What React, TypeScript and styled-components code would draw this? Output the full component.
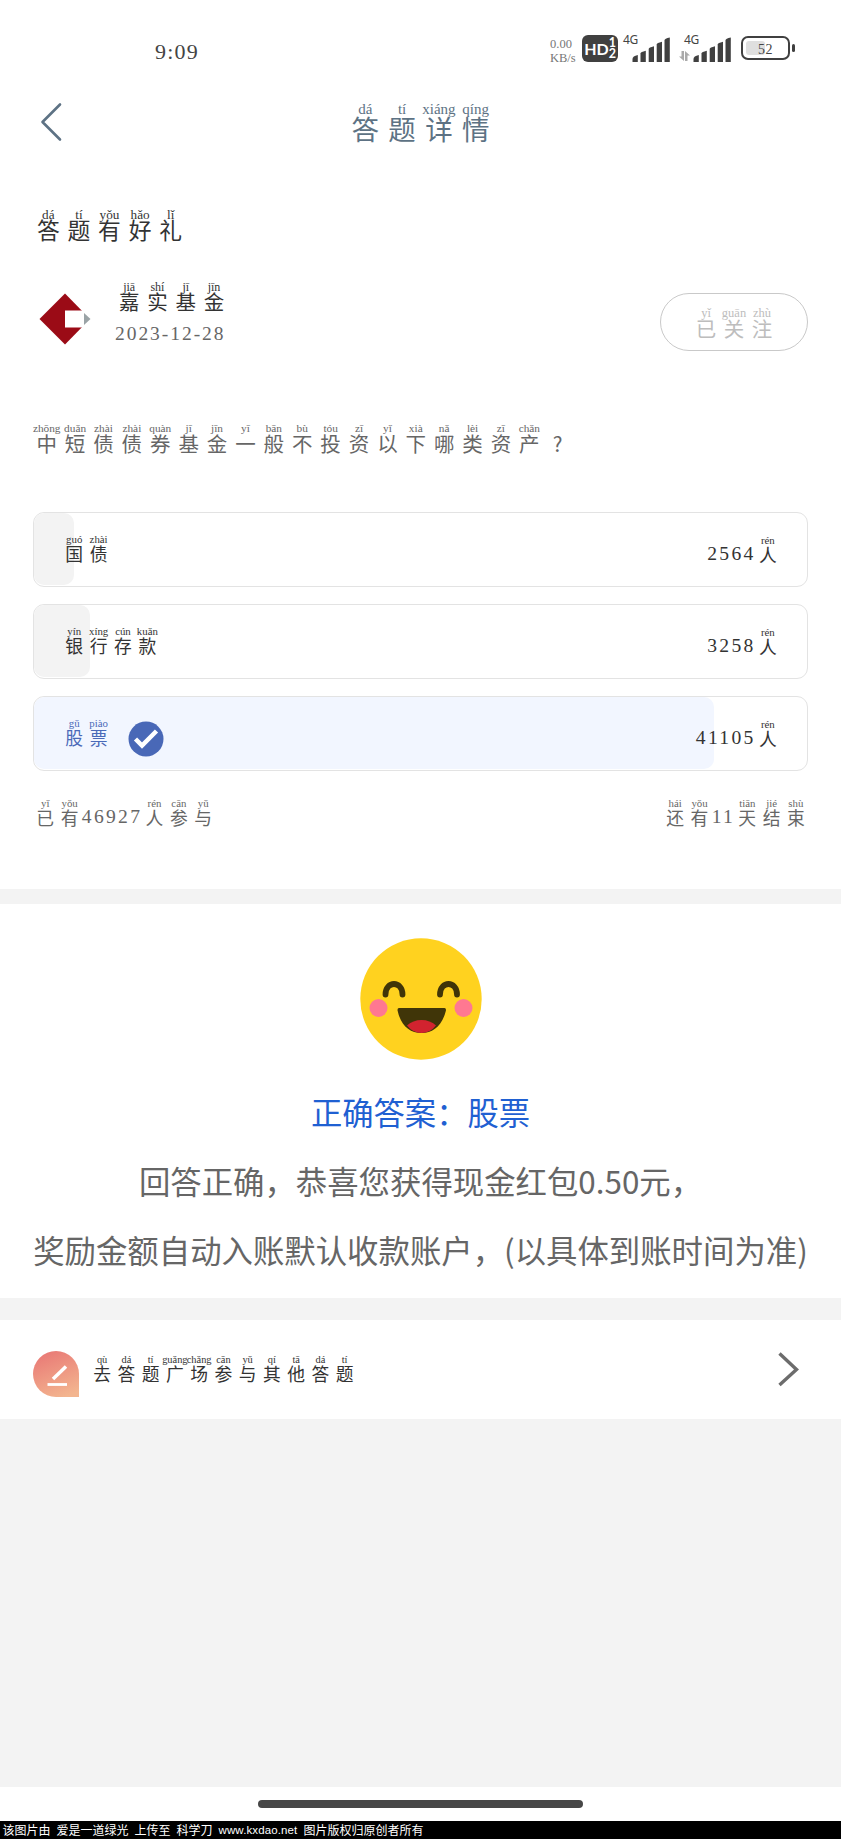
import React from 'react';
import styled, { createGlobalStyle } from 'styled-components';

const serif = '"Liberation Serif", "Noto Sans CJK SC", serif';
const sans = '"Noto Sans CJK SC", sans-serif';

const GlobalStyle = createGlobalStyle`
  *, *::before, *::after { box-sizing: border-box; }
  body { margin: 0; background: #f3f3f3; font-family: ${serif}; }
`;

const Screen = styled.main`
  width: 841px;
  height: 1839px;
  display: flex;
  flex-direction: column;
  background: #f3f3f3;
  overflow: hidden;
`;

/* ---------- annotated text ---------- */

const AnnotatedLine = styled.span<{ $color: string }>`
  display: inline-flex;
  align-items: flex-end;
  white-space: nowrap;
  color: ${(p) => p.$color};
`;

const Syllable = styled.span<{ $pitch: number }>`
  display: flex;
  flex-direction: column;
  align-items: center;
  width: ${(p) => p.$pitch}px;
`;

const Pinyin = styled.span<{ $size: number }>`
  font-family: "Liberation Serif", serif;
  font-size: ${(p) => p.$size}px;
  line-height: ${(p) => p.$size}px;
  height: ${(p) => p.$size}px;
`;

const Hanzi = styled.span<{ $size: number }>`
  margin-top: ${(p) => (p.$size < 20 ? 0 : -0.075)}em;
  font-family: ${sans};
  font-size: ${(p) => p.$size}px;
  line-height: ${(p) => p.$size}px;
  height: ${(p) => p.$size}px;
`;

const Digits = styled.span<{ $size: number }>`
  font-size: ${(p) => p.$size}px;
  line-height: ${(p) => p.$size}px;
  letter-spacing: 2.3px;
`;

type Part = [string, string?];

interface AnnotatedProps {
  parts: Part[];
  size: number;
  small: number;
  pitch: number;
  color: string;
}

function Annotated({ parts, size, small, pitch, color }: AnnotatedProps) {
  return (
    <AnnotatedLine $color={color}>
      {parts.map(([text, reading], i) =>
        reading === undefined ? (
          <Digits key={i} $size={19.6}>{text}</Digits>
        ) : (
          <Syllable key={i} $pitch={pitch}>
            <Pinyin $size={small}>{reading}</Pinyin>
            <Hanzi $size={size}>{text}</Hanzi>
          </Syllable>
        ),
      )}
    </AnnotatedLine>
  );
}

/* ---------- status bar ---------- */

const StatusBar = styled.header`
  height: 82px;
  flex: none;
  display: flex;
  align-items: flex-start;
  justify-content: space-between;
  padding: 35px 46px 0 155px;
  background: #fff;
  color: #444;
`;

const Clock = styled.time`
  margin-top: 5px;
  font-size: 22px;
  line-height: 24px;
  letter-spacing: 1.2px;
`;

const StatusIcons = styled.div`
  display: flex;
  align-items: flex-start;
`;

const Speed = styled.div`
  width: 32px;
  margin-top: 2px;
  font-size: 12.5px;
  line-height: 14px;
  color: #777;
`;

const HdBadge = styled.div`
  width: 36px;
  height: 27px;
  display: flex;
  align-items: center;
  justify-content: center;
  border-radius: 6px;
  background: #404040;
  color: #fff;
  font: bold 16px/27px Lato, sans-serif;
`;

const HdStack = styled.span`
  display: flex;
  flex-direction: column;
  font-size: 12.5px;
  line-height: 11.5px;
  margin-top: -1px;
`;

const Network = styled.div<{ $width: number; $gap: number }>`
  width: ${(p) => p.$width}px;
  margin-left: ${(p) => p.$gap}px;
  display: flex;
  align-items: flex-start;
`;

const NetworkLabel = styled.span`
  width: 15px;
  font: 12px/16px "Noto Sans", sans-serif;
  letter-spacing: -0.4px;
  margin: -5px -6px 0 0;
  padding-top: 2px;
`;

const Battery = styled.div`
  width: 49px;
  height: 24px;
  margin: 1px 0 0 10px;
  padding: 2.5px 3px;
  display: flex;
  border: 2.5px solid #404040;
  border-radius: 7px;
`;

const Charge = styled.div`
  width: 19px;
  height: 14px;
  border-radius: 3px;
  background: #dfdfdf;
`;

const ChargeText = styled.span`
  margin: 2px 0 0 -7px;
  font-size: 14px;
  line-height: 14px;
  letter-spacing: 0.6px;
`;

const BatteryTip = styled.span`
  width: 3px;
  height: 8px;
  margin: 9px 0 0 2px;
  border-radius: 1.5px;
  background: #404040;
`;

function SignalBars() {
  return (
    <svg width="38" height="25" viewBox="0 0 38 25" fill="#404040">
      <path d="M0.5 25v-3q0-3 5.300-4v7z" />
      <path d="M8.5 25V16.500q0-1.500 5.300-2.800V25z" />
      <path d="M16.700 25V12q0-1.500 5.300-2.800V25z" />
      <path d="M24.700 25V7.500q0-1.500 5.300-2.800V25z" />
      <path d="M32.500 25V3.500q0-2 5.300-3V25z" />
    </svg>
  );
}

const Signal = styled.span<{ $top: number }>`
  display: flex;
  margin-top: ${(p) => p.$top}px;
`;

const DataArrows = styled.svg`
  margin: 16px -6px 0 0;
`;

/* ---------- navigation ---------- */

const NavBar = styled.nav`
  height: 100px;
  flex: none;
  display: grid;
  grid-template-columns: 100px 1fr 100px;
  padding-top: 20px;
  background: #fff;
`;

const BackButton = styled.button`
  height: 40px;
  padding: 0 0 0 39px;
  border: 0;
  background: none;
  display: flex;
`;

const NavTitle = styled.div`
  display: flex;
  justify-content: center;
  align-items: flex-start;
`;

/* ---------- question ---------- */

const QuestionCard = styled.section`
  height: 707px;
  flex: none;
  padding: 26px 33px 0;
  background: #fff;
`;

const Heading = styled.h1`
  margin: 0;
  height: 73px;
  display: flex;
  align-items: flex-start;
  font-weight: 400;
`;

const Publisher = styled.div`
  height: 142px;
  display: flex;
  align-items: flex-start;
`;

const Logo = styled.svg`
  margin: 12px 23px 0 5px;
`;

const PublisherInfo = styled.div`
  flex: 1;
  display: flex;
  flex-direction: column;
  align-items: flex-start;
`;

const PublisherName = styled.div`
  display: flex;
`;

const DateText = styled.time`
  margin-top: 12px;
  font-size: 19.5px;
  line-height: 20px;
  letter-spacing: 1.95px;
  color: #666;
`;

const FollowButton = styled.button`
  width: 148px;
  height: 58px;
  margin-top: 12px;
  padding: 2px 0 0;
  display: flex;
  justify-content: center;
  align-items: center;
  border: 1.5px solid #c9c9c9;
  border-radius: 29px;
  background: #fff;
`;

const Question = styled.div`
  height: 89px;
  display: flex;
  align-items: flex-start;
  margin-left: -0.5px;
`;

const Options = styled.div`
  display: flex;
  flex-direction: column;
  gap: 17px;
`;

const Option = styled.div`
  height: 75px;
  display: grid;
  border: 1.5px solid #e3e3e3;
  border-radius: 11px;
  overflow: hidden;
  > * { grid-area: 1 / 1; }
`;

const Share = styled.div<{ $active?: boolean }>`
  height: 72px;
  border-radius: 10px;
  background: ${(p) => (p.$active ? '#f2f6ff' : '#f3f3f3')};
`;

const OptionBody = styled.div`
  display: flex;
  align-items: flex-start;
  padding: 21px 27px 0 28px;
`;

const Votes = styled.div`
  margin: 1px 0 0 auto;
`;

const CheckMark = styled.svg`
  margin: 3px 0 0 17px;
`;

const Summary = styled.div`
  display: flex;
  justify-content: space-between;
  margin-top: 27px;
`;

/* ---------- result ---------- */

const ResultCard = styled.section`
  height: 394px;
  flex: none;
  margin-top: 15px;
  padding-top: 34px;
  display: flex;
  flex-direction: column;
  align-items: center;
  background: #fff;
  font-family: ${sans};
  font-size: 31.4px;
  color: #666;
`;

const Face = styled.svg`
  flex: none;
`;

const Answer = styled.p`
  margin: 28px 0 0;
  line-height: 48px;
  font-size: 31.3px;
  color: #1f60d2;
`;

const ResultText = styled.p<{ $top: number }>`
  margin: ${(p) => p.$top}px 0 0;
  line-height: 48px;
  white-space: nowrap;
`;

/* ---------- link row and bottom ---------- */

const LinkRow = styled.a`
  height: 99px;
  flex: none;
  margin-top: 22px;
  padding: 31px 41px 0 33px;
  display: flex;
  align-items: flex-start;
  background: #fff;
`;

const LinkText = styled.span`
  display: flex;
  flex: 1;
  margin: 4px 0 0 11px;
`;

const GestureArea = styled.div`
  height: 34px;
  flex: none;
  margin-top: auto;
  padding-top: 13px;
  display: flex;
  justify-content: center;
  background: #fff;
`;

const GestureBar = styled.div`
  width: 325px;
  height: 8px;
  border-radius: 4px;
  background: #474747;
`;

const Credit = styled.footer`
  height: 18px;
  flex: none;
  display: flex;
  gap: 6px;
  padding-left: 2.5px;
  background: #000;
  color: #fff;
  font: 12px/17px ${sans};
`;

const Site = styled.span`
  width: 79px;
  font: 11.5px/18px "Liberation Sans", sans-serif;
  letter-spacing: 0.1px;
`;

interface Choice {
  label: Part[];
  votes: string;
  share: number;
  correct?: boolean;
}

const choices: Choice[] = [
  { label: [['国', 'guó'], ['债', 'zhài']], votes: '2564', share: 40 },
  { label: [['银', 'yín'], ['行', 'xíng'], ['存', 'cún'], ['款', 'kuǎn']], votes: '3258', share: 55.5 },
  { label: [['股', 'gǔ'], ['票', 'piào']], votes: '41105', share: 679.5, correct: true },
];

const question: Part[] = [
  ['中', 'zhōng'], ['短', 'duǎn'], ['债', 'zhài'], ['债', 'zhài'], ['券', 'quàn'], ['基', 'jī'],
  ['金', 'jīn'], ['一', 'yī'], ['般', 'bān'], ['不', 'bù'], ['投', 'tóu'], ['资', 'zī'], ['以', 'yǐ'],
  ['下', 'xià'], ['哪', 'nǎ'], ['类', 'lèi'], ['资', 'zī'], ['产', 'chǎn'], ['?', ''],
];

const plaza: Part[] = [
  ['去', 'qù'], ['答', 'dá'], ['题', 'tí'], ['广', 'guǎng'], ['场', 'chǎng'], ['参', 'cān'],
  ['与', 'yǔ'], ['其', 'qí'], ['他', 'tā'], ['答', 'dá'], ['题', 'tí'],
];

export default function App() {
  return (
    <Screen>
      <GlobalStyle />
      <StatusBar>
        <Clock>9:09</Clock>
        <StatusIcons>
          <Speed>0.00<br />KB/s</Speed>
          <HdBadge>HD<HdStack><span>1</span><span>2</span></HdStack></HdBadge>
          <Network $width={47} $gap={5}>
            <NetworkLabel>4G</NetworkLabel>
            <Signal $top={1.5}><SignalBars /></Signal>
          </Network>
          <Network $width={52} $gap={9}>
            <DataArrows width="11" height="10" viewBox="0 0 11 10" fill="#aaa">
              <path d="M2.500 0h2.500v10L0 5.500h2.500zM6 10V0l5 4.500H8.500V10z" />
            </DataArrows>
            <NetworkLabel>4G</NetworkLabel>
            <Signal $top={1.5}><SignalBars /></Signal>
          </Network>
          <Battery><Charge /><ChargeText>52</ChargeText></Battery>
          <BatteryTip />
        </StatusIcons>
      </StatusBar>

      <NavBar>
        <BackButton aria-label="返回">
          <svg width="24" height="40" viewBox="0 0 24 40" fill="none" stroke="#5d7284" strokeWidth="2.6" strokeLinecap="round" strokeLinejoin="round">
            <path d="M21 2.500L3.500 20l17.500 17.500" />
          </svg>
        </BackButton>
        <NavTitle>
          <Annotated parts={[['答', 'dá'], ['题', 'tí'], ['详', 'xiáng'], ['情', 'qíng']]} size={27.5} small={15} pitch={36.8} color="#5d7284" />
        </NavTitle>
      </NavBar>

      <QuestionCard>
        <Heading>
          <Annotated parts={[['答', 'dá'], ['题', 'tí'], ['有', 'yǒu'], ['好', 'hǎo'], ['礼', 'lǐ']]} size={22.8} small={13.2} pitch={30.6} color="#333" />
        </Heading>
        <Publisher>
          <Logo width="54" height="52" viewBox="0 0 54 52">
            <path d="M27 0.500L52 26L27 51.500L1.500 26z" fill="#9b0b16" />
            <path d="M27 17.500h25v17H27z" fill="#fff" />
            <path d="M46 20l6.500 6-6.500 6z" fill="#9aa3a6" />
          </Logo>
          <PublisherInfo>
            <PublisherName>
              <Annotated parts={[['嘉', 'jiā'], ['实', 'shí'], ['基', 'jī'], ['金', 'jīn']]} size={20.5} small={12} pitch={28.3} color="#333" />
            </PublisherName>
            <DateText>2023-12-28</DateText>
          </PublisherInfo>
          <FollowButton>
            <Annotated parts={[['已', 'yǐ'], ['关', 'guān'], ['注', 'zhù']]} size={20.5} small={12.5} pitch={28} color="#bdbdbd" />
          </FollowButton>
        </Publisher>
        <Question>
          <Annotated parts={question} size={20.5} small={11.3} pitch={28.4} color="#666" />
        </Question>
        <Options>
          {choices.map((c) => (
            <Option key={c.votes}>
              <Share $active={c.correct} style={{ width: c.share }} />
              <OptionBody>
                <Annotated parts={c.label} size={17.8} small={10.8} pitch={24.4} color={c.correct ? '#4a69b8' : '#333'} />
                {c.correct && (
                  <CheckMark width="36" height="36" viewBox="0 0 36 36">
                    <circle cx="18" cy="18" r="17.500" fill="#4968b7" />
                    <path d="M7.500 18l6.500 6.500L28.500 10" fill="none" stroke="#fff" strokeWidth="4.500" />
                  </CheckMark>
                )}
                <Votes>
                  <Annotated parts={[[c.votes], ['人', 'rén']]} size={17.8} small={10.8} pitch={24.4} color="#333" />
                </Votes>
              </OptionBody>
            </Option>
          ))}
        </Options>
        <Summary>
          <Annotated parts={[['已', 'yǐ'], ['有', 'yǒu'], ['46927'], ['人', 'rén'], ['参', 'cān'], ['与', 'yǔ']]} size={17.8} small={10.8} pitch={24.4} color="#666" />
          <Annotated parts={[['还', 'hái'], ['有', 'yǒu'], ['11'], ['天', 'tiān'], ['结', 'jié'], ['束', 'shù']]} size={17.8} small={10.8} pitch={24.3} color="#666" />
        </Summary>
      </QuestionCard>

      <ResultCard>
        <Face width="122" height="122" viewBox="0 0 122 122">
          <circle cx="61" cy="61" r="60.700" fill="#ffd21f" />
          <circle cx="18.500" cy="70" r="9" fill="#ff7891" />
          <circle cx="103.500" cy="70" r="9" fill="#ff7891" />
          <path d="M25.500 56.500c0-14 17-14 17 0M80 56.500c0-14 17-14 17 0" fill="none" stroke="#403508" strokeWidth="5.800" strokeLinecap="round" />
          <path d="M39 70h45.500q2 0 1.300 3C82 88 73 95 61.500 95S41 88 37.700 73q-.7-3 1.300-3z" fill="#403508" />
          <path d="M47 87.500q6-5.500 14.500-5.500T76 87.500q-6 7.500-14.500 7.500T47 87.500z" fill="#d2232f" />
        </Face>
        <Answer>正确答案：股票</Answer>
        <ResultText $top={21}>回答正确，恭喜您获得现金红包0.50元，</ResultText>
        <ResultText $top={21}>奖励金额自动入账默认收款账户，(以具体到账时间为准)</ResultText>
      </ResultCard>

      <LinkRow>
        <svg width="46" height="46" viewBox="0 0 46 46">
          <defs>
            <linearGradient id="badge" x1="0.300" y1="0" x2="0.700" y2="1">
              <stop offset="0" stopColor="#e97a76" />
              <stop offset="1" stopColor="#f3b58f" />
            </linearGradient>
          </defs>
          <path d="M23 0a23 23 0 0 1 23 23v23H23A23 23 0 0 1 23 0z" fill="url(#badge)" />
          <path d="M20 28L33 15.500" stroke="#fff" strokeWidth="3.500" />
          <path d="M14.500 33.500h19.500" stroke="#fff" strokeWidth="2.800" />
        </svg>
        <LinkText>
          <Annotated parts={plaza} size={17.8} small={10.4} pitch={24.25} color="#333" />
        </LinkText>
        <svg width="22" height="36" viewBox="0 0 22 36" fill="none" stroke="#6c6c6c" strokeWidth="3.400">
          <path d="M1.500 2.500l17 16L1.500 34" />
        </svg>
      </LinkRow>

      <GestureArea><GestureBar /></GestureArea>
      <Credit>
        <span>该图片由</span>
        <span>爱是一道绿光</span>
        <span>上传至</span>
        <span>科学刀</span>
        <Site>www.kxdao.net</Site>
        <span>图片版权归原创者所有</span>
      </Credit>
    </Screen>
  );
}
